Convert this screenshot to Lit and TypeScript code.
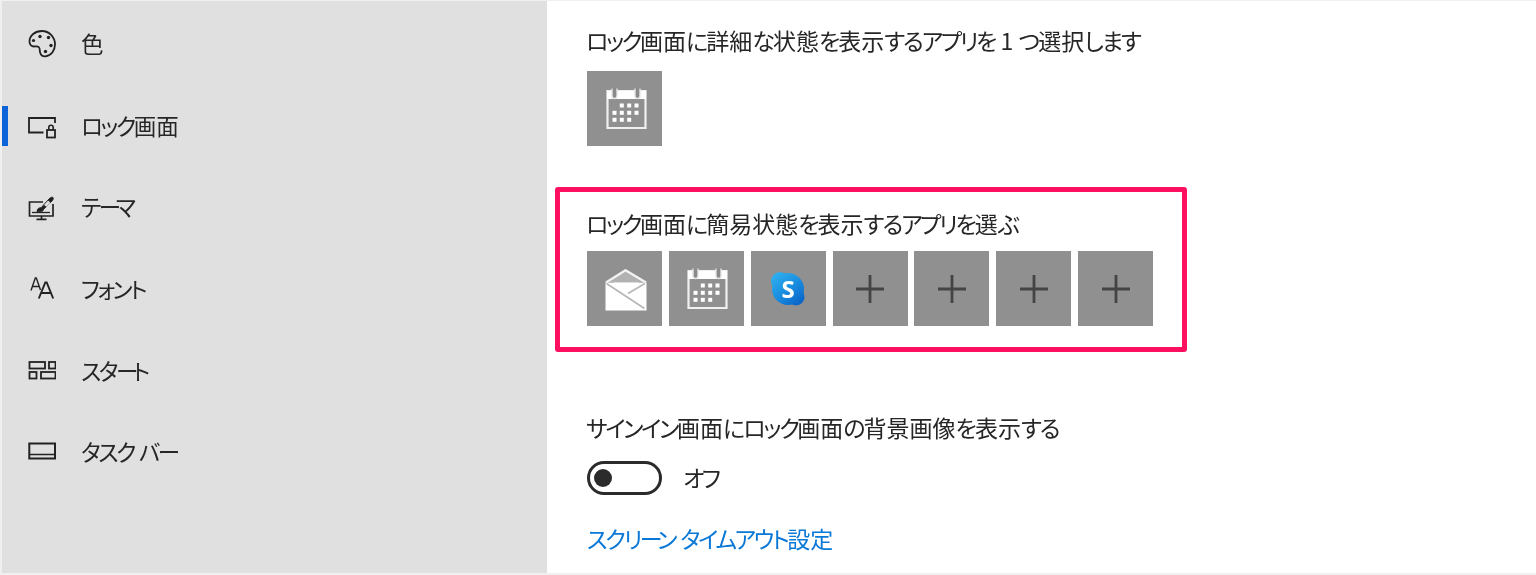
import { LitElement, html, css, svg } from "lit";
import { customElement } from "lit/decorators.js";

const S = "#222";
const palette = svg`<svg class="ni" viewBox="0 0 28 28"><path d="M14 1C7 1 1.500 5.500 1.500 11.500c0 3 2 5 4.500 5 2 0 3.500-.5 4.800.6 1.400 1.200.7 3.400 1.300 5.400.8 2.700 3 4.200 5.400 3.900C23.500 25.700 27 20 27 14.500 27 7 21 1 14 1Z" fill="none" stroke=${S} stroke-width="1.800"/><g fill=${S}><circle cx="5.500" cy="10.500" r="1.600"/><circle cx="12" cy="6.500" r="1.700"/><circle cx="20.500" cy="7.500" r="1.700"/><circle cx="23" cy="15.500" r="1.700"/><circle cx="17.500" cy="21.500" r="1.700"/></g></svg>`;
const lock = svg`<svg class="ni" viewBox="0 0 28 28"><path d="M15.500 20.500H1V6h26v5" fill="none" stroke=${S} stroke-width="1.800"/><rect x="19" y="18" width="8" height="7.500" fill="none" stroke=${S} stroke-width="1.800"/><path d="M20.800 18v-2.500a2.200 2.200 0 0 1 4.400 0V18" fill="none" stroke=${S} stroke-width="1.600"/></svg>`;
const theme = svg`<svg class="ni" viewBox="0 0 28 28"><path d="M15 9H1.500v14h23.500V11" fill="none" stroke=${S} stroke-width="1.700"/><path d="M13.500 23v3M8.500 26.300h10" stroke=${S} stroke-width="1.700"/><path d="M4 19.500h18" stroke=${S} stroke-width="1.300"/><path d="M9 18.500c.2-2.600 1.800-4 4.200-3.800l8-9c1-1 3-2 3.800-1.200.800.8-.200 2.800-1.200 3.800l-8.300 8c.1 2-3 3.200-6.500 2.200Z" fill=${S} stroke=${S} stroke-width="1"/><path d="M16 12l4-4.500 2.500 2.300-4 4z" fill="#e0e0e0"/></svg>`;
const fontIcon = html`<svg class="ni" viewBox="0 0 28 28"><path d="M3 15.500 7.300 3h1l4.200 12M4.500 11.500h6.500" fill="none" stroke=${S} stroke-width="1.400"/><path d="M10.800 23.500 17.300 7.500h1.400l6.500 16M13.200 18h10" fill="none" stroke=${S} stroke-width="1.900"/></svg>`;
const start = svg`<svg class="ni" viewBox="0 0 28 28"><g fill="none" stroke=${S} stroke-width="1.800"><rect x="1.500" y="5" width="15.500" height="6.500"/><rect x="21" y="5" width="6.500" height="6.500"/><rect x="1.500" y="15" width="7" height="6.500"/><rect x="13" y="15" width="14.500" height="6.500"/></g></svg>`;
const taskbar = svg`<svg class="ni" viewBox="0 0 28 28"><rect x="1.300" y="5.500" width="25.700" height="15" fill="none" stroke=${S} stroke-width="2"/><path d="M1 16.500h26" stroke=${S} stroke-width="1.500"/></svg>`;

const DOTS = [
  [20.8, 18.5], [28.2, 18.5], [35.5, 18.5],
  [13.5, 25.8], [20.8, 25.8], [28.2, 25.8], [35.5, 25.8],
  [13.5, 32.8], [20.8, 32.8], [28.2, 32.8],
];
const calendar = svg`<svg width="48" height="44" viewBox="0 0 48 44"><path d="M6.500 4v37h38V4z" fill="none" stroke="#f0f0f0" stroke-width="2.200"/><rect x="6" y="4" width="39" height="8" fill="#fff"/><path d="M11 1.500v7.500a2.500 2.500 0 0 0 5 0V1.500M34 1.500v7.500a2.500 2.500 0 0 0 5 0V1.500" fill="#8a8a8a" stroke="#e4e4e4" stroke-width="1.400"/><g fill="#fff">${DOTS.map(
  ([x, y]) => svg`<rect x=${x - 2} y=${y - 2} width="4" height="4"/>`
)}</g></svg>`;
const mail = svg`<svg width="48" height="44" viewBox="0 0 48 44"><path d="M4.500 15.500h41v28h-41z" fill="#fff"/><path d="M5 15.500 24.500 3.200 45 15.500" fill="#b2b2b2" stroke="#f2f2f2" stroke-width="2.400" stroke-linejoin="round"/><path d="M12 15.500h26l-13 8z" fill="#fff"/><path d="M5.500 16.500l38 25M44 16.500 27 26.500" fill="none" stroke="#b8b8b8" stroke-width="1.800"/></svg>`;
const skype = svg`<svg width="36" height="36" viewBox="0 0 36 36"><defs><linearGradient id="sk" gradientUnits="userSpaceOnUse" x1="5" y1="3" x2="30" y2="34"><stop offset="0" stop-color="#2eaeee"/><stop offset="0.500" stop-color="#1a8ee0"/><stop offset="1" stop-color="#0a62c7"/></linearGradient></defs><g fill="url(#sk)"><circle cx="18" cy="18" r="16"/><circle cx="10" cy="10" r="9"/><circle cx="26" cy="26" r="8.500"/></g><text x="18" y="26.500" text-anchor="middle" font-family="'Open Sans',sans-serif" font-weight="700" font-size="24" fill="#fff">S</text></svg>`;
const plus = svg`<svg width="28" height="28" viewBox="0 0 28 28"><path d="M14 0v28M0 14h28" stroke="#444" stroke-width="2.800"/></svg>`;

/* Wrap kana runs so they can be set tighter, like the narrow kana of the reference's UI font. */
function jp(text: string) {
  return text.split(/(ー+|[ァ-ヺ]+|[ぁ-ゖ]+)/).map((part) => {
    if (!part) return "";
    if (part[0] === "ー") return html`<span class="long">${part}</span>`;
    if (/[ァ-ヺ]/.test(part[0])) return html`<span class="kata">${part}</span>`;
    if (/[ぁ-ゖ]/.test(part[0])) return html`<span class="hira">${part}</span>`;
    return part;
  });
}

const NAV = [
  { icon: palette, label: "色" },
  { icon: lock, label: "ロック画面", active: true },
  { icon: theme, label: "テーマ" },
  { icon: fontIcon, label: "フォント" },
  { icon: start, label: "スタート" },
  { icon: taskbar, label: "タスク バー" },
];

@customElement("app-root")
export class AppRoot extends LitElement {
  static styles = css`
    :host {
      display: flex;
      box-sizing: border-box;
      width: 1536px;
      height: 575px;
      overflow: hidden;
      background: #fff;
      border: solid #f0f0f0;
      border-width: 1px 0 2px 2px;
      color: #262626;
      font-family: "Noto Sans CJK JP", "Noto Sans", sans-serif;
      font-size: 23px;
      font-feature-settings: "palt";
      filter: blur(0.35px);
    }
    .kata { letter-spacing: -2.4px; }
    .hira { letter-spacing: -1.9px; }
    .long { letter-spacing: -5.5px; }
    .side {
      flex: 0 0 545px;
      box-sizing: border-box;
      background: #e0e0e0;
      padding-top: 2px;
      font-size: 22.500px;
    }
    .item {
      position: relative;
      display: flex;
      align-items: center;
      gap: 25px;
      height: 81.700px;
      padding-left: 26px;
    }
    .item > span { padding-bottom: 2px; }
    .item.active::before {
      content: "";
      position: absolute;
      left: 0;
      top: 21px;
      width: 6px;
      height: 40px;
      background: #0f63d8;
    }
    .ni { width: 28px; height: 28px; flex: none; }
    .main { flex: 1; padding: 24px 0 0 40px; }
    .h { line-height: 30px; height: 32px; white-space: nowrap; margin-left: -1px; }
    .tiles { display: flex; gap: 6.850px; }
    .tile {
      width: 75px;
      height: 75px;
      background: #909090;
      display: flex;
      align-items: center;
      justify-content: center;
    }
    .single { margin-top: 14px; }
    .box {
      box-sizing: border-box;
      width: 632px;
      height: 165px;
      margin: 41px 0 0 -32px;
      padding: 16px 0 0 27px;
      border: 5px solid #ff0f5f;
      border-radius: 3px;
    }
    .box .tiles { margin-top: 11px; }
    .h3 { margin-top: 60px; }
    .toggle-row { display: flex; align-items: center; gap: 21px; margin-top: 16px; }
    .toggle-row > span { padding-bottom: 2px; }
    .toggle {
      box-sizing: border-box;
      width: 75px;
      height: 34px;
      border: 3.500px solid #2b2b2b;
      border-radius: 17px;
      display: flex;
      align-items: center;
      padding-left: 4px;
    }
    .knob { width: 18px; height: 18px; border-radius: 50%; background: #2b2b2b; }
    .link { display: block; margin-top: 27px; height: 32px; line-height: 30px; color: #0a78d7; text-decoration: none; }
  `;

  render() {
    return html`
      <nav class="side">
        ${NAV.map(
          (n) => html`<div class="item ${n.active ? "active" : ""}">${n.icon}<span>${jp(n.label)}</span></div>`
        )}
      </nav>
      <main class="main">
        <div class="h">${jp("ロック画面に詳細な状態を表示するアプリを 1 つ選択します")}</div>
        <div class="tile single">${calendar}</div>
        <section class="box">
          <div class="h">${jp("ロック画面に簡易状態を表示するアプリを選ぶ")}</div>
          <div class="tiles">
            <div class="tile">${mail}</div>
            <div class="tile">${calendar}</div>
            <div class="tile">${skype}</div>
            <div class="tile">${plus}</div>
            <div class="tile">${plus}</div>
            <div class="tile">${plus}</div>
            <div class="tile">${plus}</div>
          </div>
        </section>
        <div class="h h3">${jp("サインイン画面にロック画面の背景画像を表示する")}</div>
        <div class="toggle-row"><div class="toggle"><div class="knob"></div></div><span>${jp("オフ")}</span></div>
        <a class="link">${jp("スクリーン タイムアウト設定")}</a>
      </main>
    `;
  }
}
